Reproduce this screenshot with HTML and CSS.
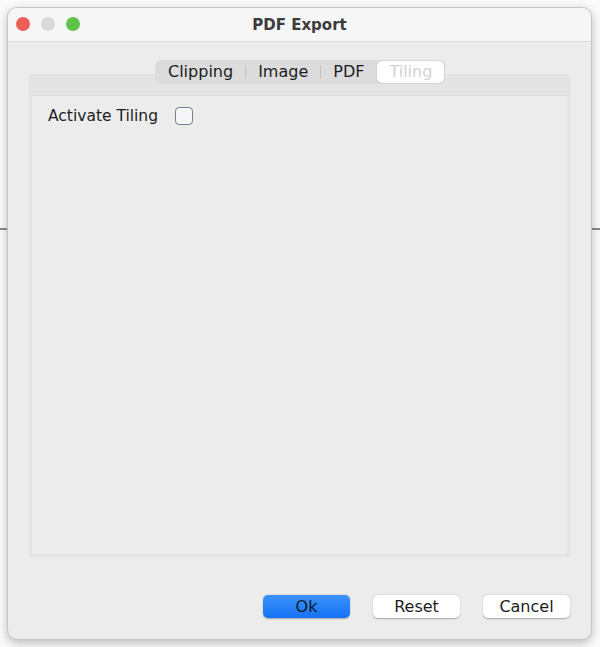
FILE: index.html
```html
<!DOCTYPE html>
<html lang="en">
<head>
    <meta charset="UTF-8">
    <title>PDF Export</title>
    <link rel="stylesheet" href="styles.css">
</head>
<body>

    <div class="desktop">
        <div class="window">
            <div class="titlebar">
                <div class="lights">
                    <span class="light red"></span>
                    <span class="light gray"></span>
                    <span class="light green"></span>
                </div>
                <div class="title">PDF Export</div>
            </div>

            <div class="content">
                <div class="tabpane">
                    <div class="tabs">
                        <span class="tab">Clipping</span>
                        <span class="sep"></span>
                        <span class="tab">Image</span>
                        <span class="sep"></span>
                        <span class="tab">PDF</span>
                        <span class="tab selected">Tiling</span>
                    </div>
                    <div class="pane-head"></div>
                    <div class="pane-body">
                        <label class="option">
                            <span>Activate Tiling</span>
                            <span class="checkbox"></span>
                        </label>
                    </div>
                </div>

                <div class="buttons">
                    <button class="btn primary">Ok</button>
                    <button class="btn">Reset</button>
                    <button class="btn">Cancel</button>
                </div>
            </div>
        </div>
    </div>

</body>
</html>
```

FILE: styles.css
```css
body {
    margin: 0;
    font-family: "DejaVu Sans", "Liberation Sans", sans-serif;
    background: #e2e2e2;
    color: #1d1d1d;
}

.desktop {
    width: 600px;
    height: 647px;
    padding: 7px 8px 9px 7px;
    box-sizing: border-box;
    background:
        linear-gradient(#8a8a8a, #8a8a8a) 0 228px / 100% 2px no-repeat,
        linear-gradient(#fafafa, #fafafa);
}

.window {
    height: 631px;
    background: #ececec;
    border-radius: 10px;
    border: 1px solid #c6c6c6;
    box-shadow: 0 3px 10px rgba(0, 0, 0, 0.25);
    display: flex;
    flex-direction: column;
    overflow: hidden;
}

.titlebar {
    height: 33px;
    background: #f6f6f6;
    border-bottom: 1px solid #d9d9d9;
    position: relative;
    display: flex;
    align-items: center;
    justify-content: center;
}

.lights {
    position: absolute;
    left: 8px;
    top: 9px;
    display: flex;
    gap: 11px;
}

.light {
    width: 14px;
    height: 14px;
    border-radius: 50%;
}

.light.red { background: #ec5f57; }
.light.gray { background: #d9d9d9; }
.light.green { background: #5dc34a; }

.title {
    font-weight: bold;
    font-size: 15px;
    color: #3c3c3c;
}

.content {
    flex: 1;
    display: flex;
    flex-direction: column;
    padding: 18px 21px 21px 21px;
}

.tabpane {
    position: relative;
    margin-top: 14px;
    height: 483px;
    display: flex;
    flex-direction: column;
}

.tabs {
    position: absolute;
    top: -14px;
    left: 126px;
    height: 24px;
    display: flex;
    align-items: center;
    background: #dcdcdc;
    border-radius: 6px;
    padding: 0 1px;
    font-size: 16px;
    z-index: 1;
}

.tab {
    padding: 0 12px;
    line-height: 22px;
    color: #1d1d1d;
}

.tab.selected {
    background: #fff;
    color: #d2d2d2;
    border-radius: 5px;
    box-shadow: 0 0 1px rgba(0, 0, 0, 0.35);
    margin-left: 1px;
}

.sep {
    width: 1px;
    height: 14px;
    background: #c4c4c4;
}

.pane-head {
    height: 20px;
    background: #e4e4e4;
    border: 1px solid #e0e0e0;
    border-bottom: none;
    border-radius: 5px 5px 0 0;
}

.pane-body {
    flex: 1;
    background: #ececec;
    border: 3px solid #e4e4e4;
    border-top: 1px solid #dedede;
    padding: 11px 16px;
}

.option {
    display: flex;
    align-items: center;
    gap: 17px;
    font-size: 15.5px;
}

.checkbox {
    width: 16px;
    height: 16px;
    border: 1.5px solid #7a7f8c;
    border-radius: 4px;
    background: #f6f6f8;
}

.buttons {
    margin-top: auto;
    display: flex;
    justify-content: flex-end;
    gap: 23px;
}

.btn {
    width: 87px;
    height: 23px;
    border: none;
    border-radius: 5px;
    background: #fff;
    box-shadow: 0 0.5px 1.5px rgba(0, 0, 0, 0.3);
    font-family: inherit;
    font-size: 16px;
    color: #1d1d1d;
    padding: 0;
}

.btn.primary {
    background: linear-gradient(#3b93fb, #1572f5);
    color: #0e1a2c;
}
```
